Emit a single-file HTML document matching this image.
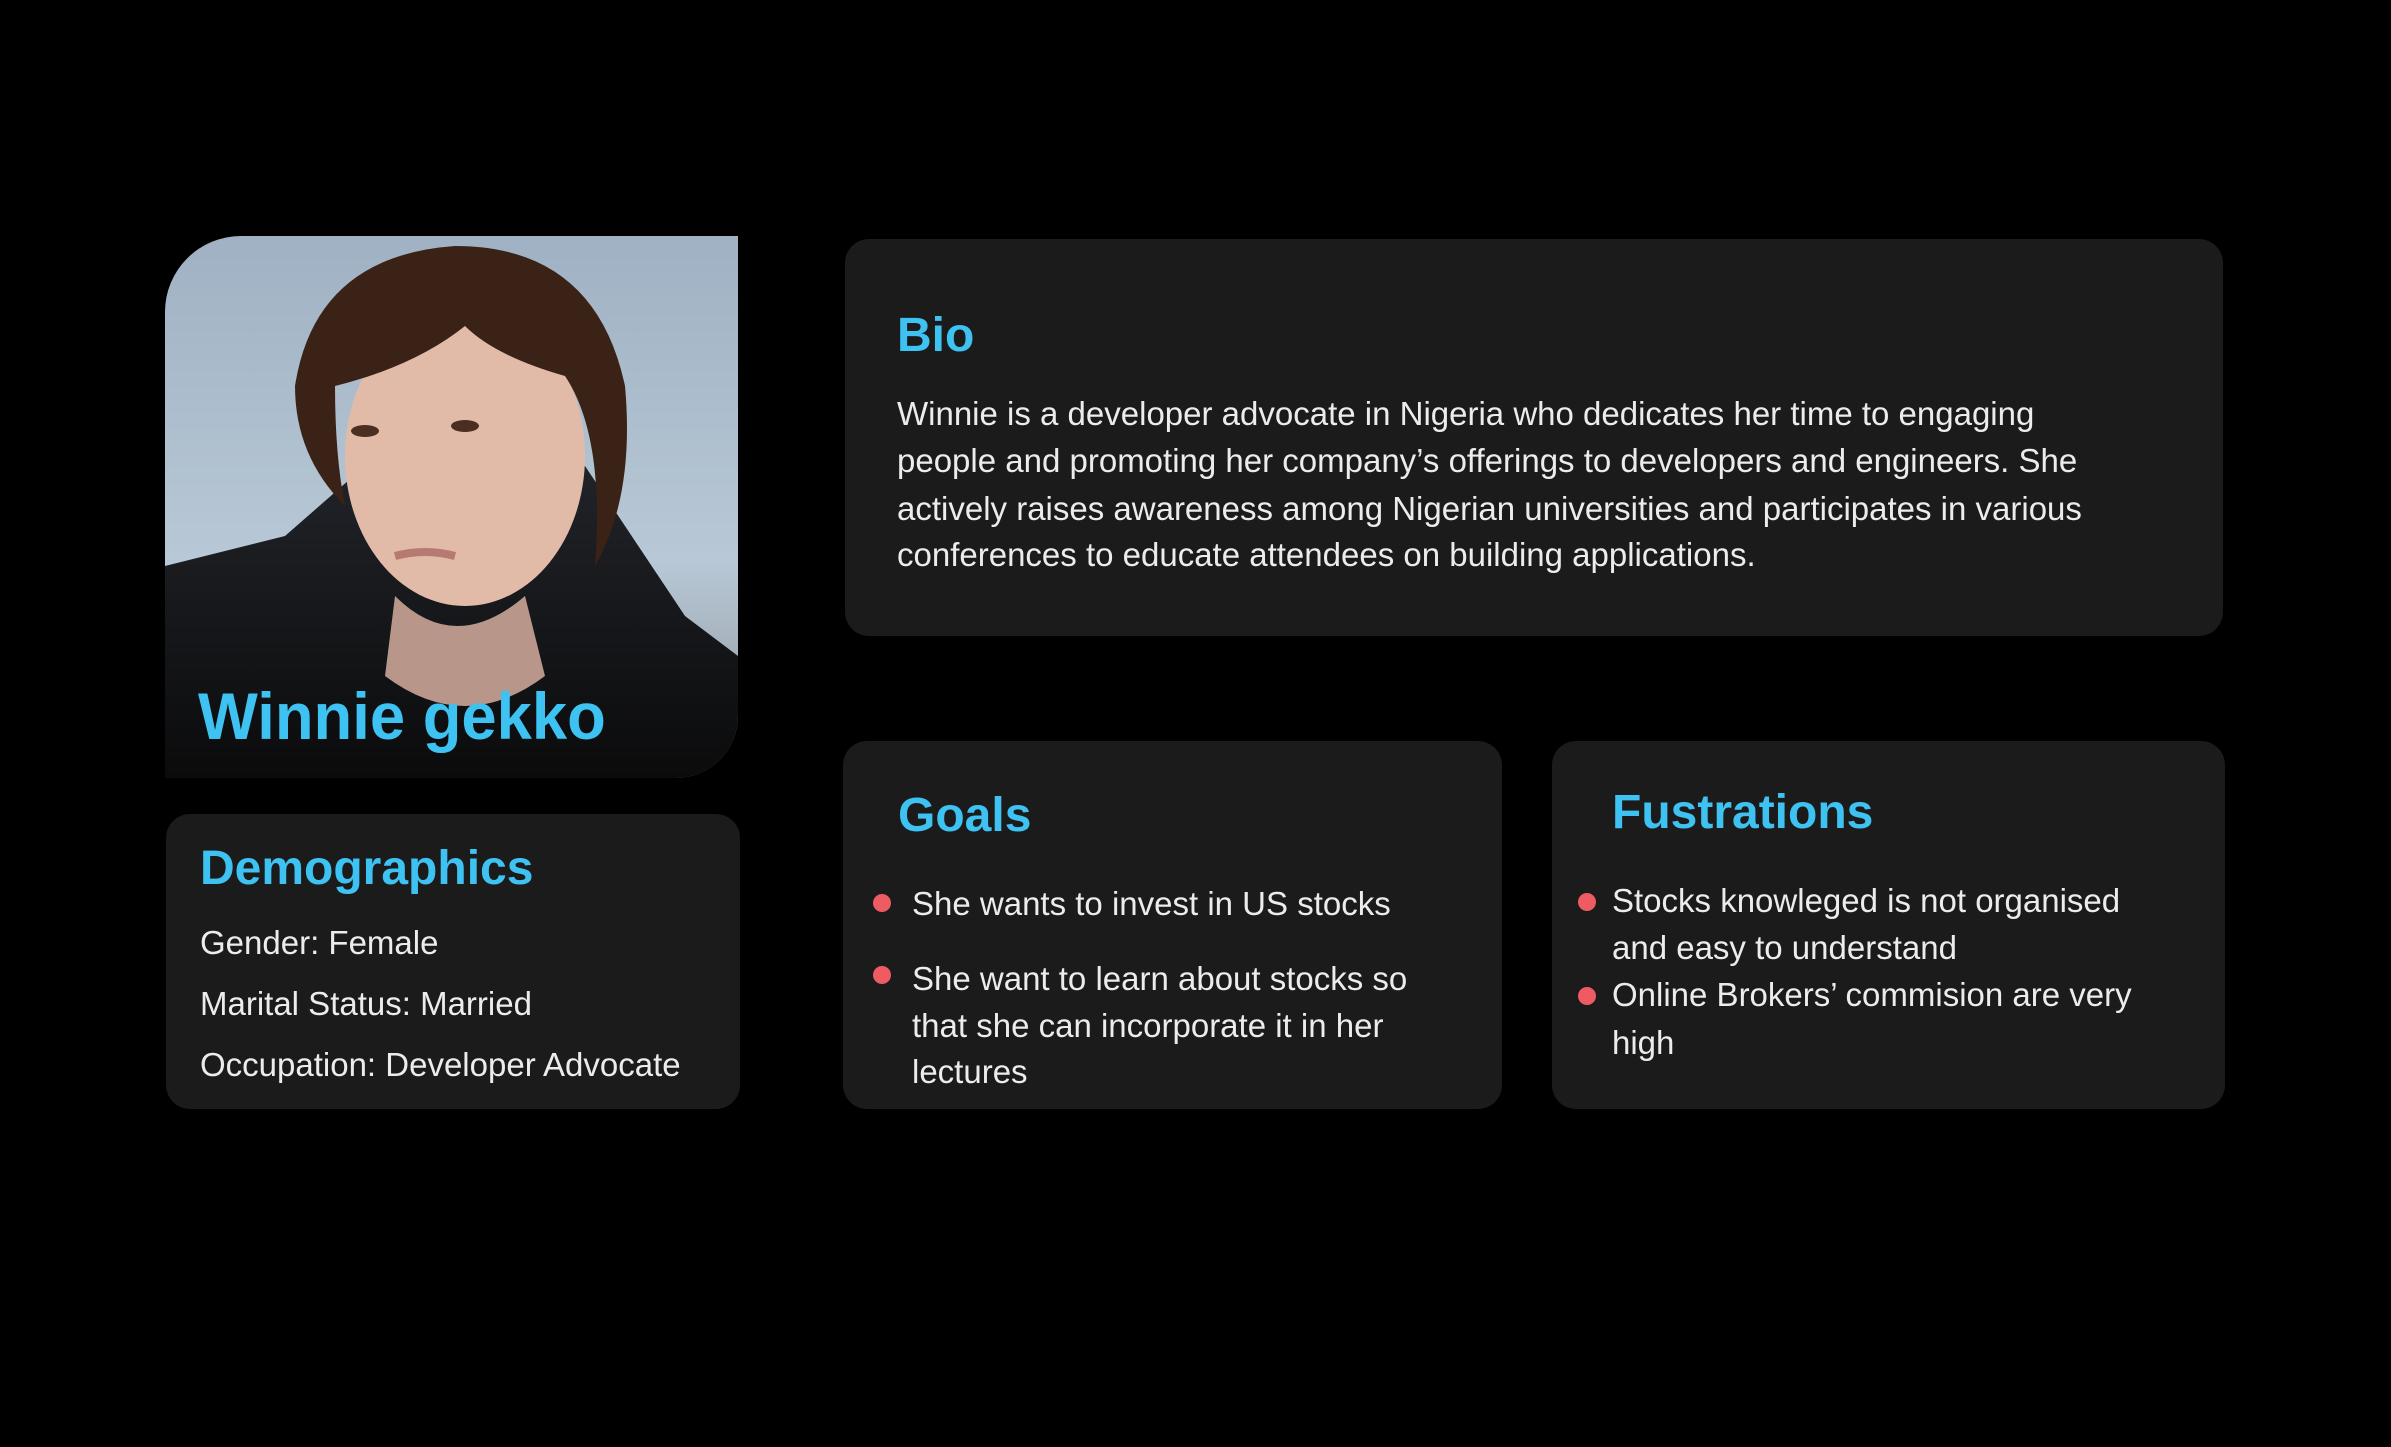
<!DOCTYPE html>
<html><head><meta charset="utf-8"><style>
body{margin:0;width:2391px;height:1447px;background:#000;position:relative;overflow:hidden;font-family:"Liberation Sans",sans-serif;}
.card{position:absolute;background:#1b1b1b;border-radius:24px;}
.t{position:absolute;white-space:nowrap;transform-origin:left center;transform:scaleX(1.0);line-height:1;}
.h{color:#3ec2f2;font-weight:bold;font-size:48px;}
.p{color:#ececec;font-size:33px;}
.dot{position:absolute;width:18px;height:18px;border-radius:50%;background:#ef5b63;}
.photo{position:absolute;left:165px;top:236px;width:573px;height:542px;border-radius:76px 0 62px 0;overflow:hidden;
background:linear-gradient(180deg,#9fb1c3 0%,#b8c8d6 60%,#a4b0bb 78%,#6a6e74 100%);}
</style></head><body>
<div class="photo">
<svg width="573" height="542" viewBox="0 0 573 542">
<defs><linearGradient id="g" x1="0" y1="0" x2="0" y2="1"><stop offset="0" stop-color="#202328"/><stop offset="1" stop-color="#0b0b0c"/></linearGradient></defs>
<path d="M0 330 L120 300 L200 230 L300 280 L420 230 L520 380 L573 420 L573 542 L0 542Z" fill="url(#g)"/>
<path d="M230 360 Q290 420 360 360 L380 440 Q300 500 220 440Z" fill="#b8968a"/>
<ellipse cx="300" cy="220" rx="120" ry="150" fill="#e2bba8"/>
<path d="M130 150 Q150 20 290 10 Q430 10 460 150 Q470 260 430 330 Q440 200 400 140 Q330 120 300 90 Q250 130 170 150 Q170 220 180 270 Q130 220 130 150Z" fill="#3b2216"/>
<ellipse cx="200" cy="195" rx="14" ry="6" fill="#4a2e22"/><ellipse cx="300" cy="190" rx="14" ry="6" fill="#4a2e22"/>
<path d="M230 320 Q260 312 290 320" stroke="#b77a72" stroke-width="8" fill="none"/>
</svg>
<div class="t" style="left:33px;top:447px;color:#3ec2f2;font-weight:bold;font-size:66px;transform:scaleX(0.96)">Winnie gekko</div>
</div>

<div class="card" style="left:166px;top:814px;width:574px;height:295px;"></div>
<div class="t h" style="left:200px;top:845px;">Demographics</div>
<div class="t p" style="left:200px;top:926px;">Gender: Female</div>
<div class="t p" style="left:200px;top:987px;">Marital Status: Married</div>
<div class="t p" style="left:200px;top:1048px;">Occupation: Developer Advocate</div>

<div class="card" style="left:845px;top:239px;width:1378px;height:397px;"></div>
<div class="t h" style="left:897px;top:312px;">Bio</div>
<div class="t p" style="left:897px;top:397px;">Winnie is a developer advocate in Nigeria who dedicates her time to engaging</div>
<div class="t p" style="left:897px;top:444px;">people and promoting her company’s offerings to developers and engineers. She</div>
<div class="t p" style="left:897px;top:492px;">actively raises awareness among Nigerian universities and participates in various</div>
<div class="t p" style="left:897px;top:538px;">conferences to educate attendees on building applications.</div>

<div class="card" style="left:843px;top:741px;width:659px;height:368px;"></div>
<div class="t h" style="left:898px;top:792px;">Goals</div>
<div class="dot" style="left:873px;top:894px;"></div>
<div class="t p" style="left:912px;top:887px;">She wants to invest in US stocks</div>
<div class="dot" style="left:873px;top:966px;"></div>
<div class="t p" style="left:912px;top:962px;">She want to learn about stocks so</div>
<div class="t p" style="left:912px;top:1009px;">that she can incorporate it in her</div>
<div class="t p" style="left:912px;top:1055px;">lectures</div>

<div class="card" style="left:1552px;top:741px;width:673px;height:368px;"></div>
<div class="t h" style="left:1612px;top:789px;">Fustrations</div>
<div class="dot" style="left:1578px;top:893px;"></div>
<div class="t p" style="left:1612px;top:884px;">Stocks knowleged is not organised</div>
<div class="t p" style="left:1612px;top:931px;">and easy to understand</div>
<div class="dot" style="left:1578px;top:987px;"></div>
<div class="t p" style="left:1612px;top:978px;">Online Brokers’ commision are very</div>
<div class="t p" style="left:1612px;top:1026px;">high</div>
</body></html>
